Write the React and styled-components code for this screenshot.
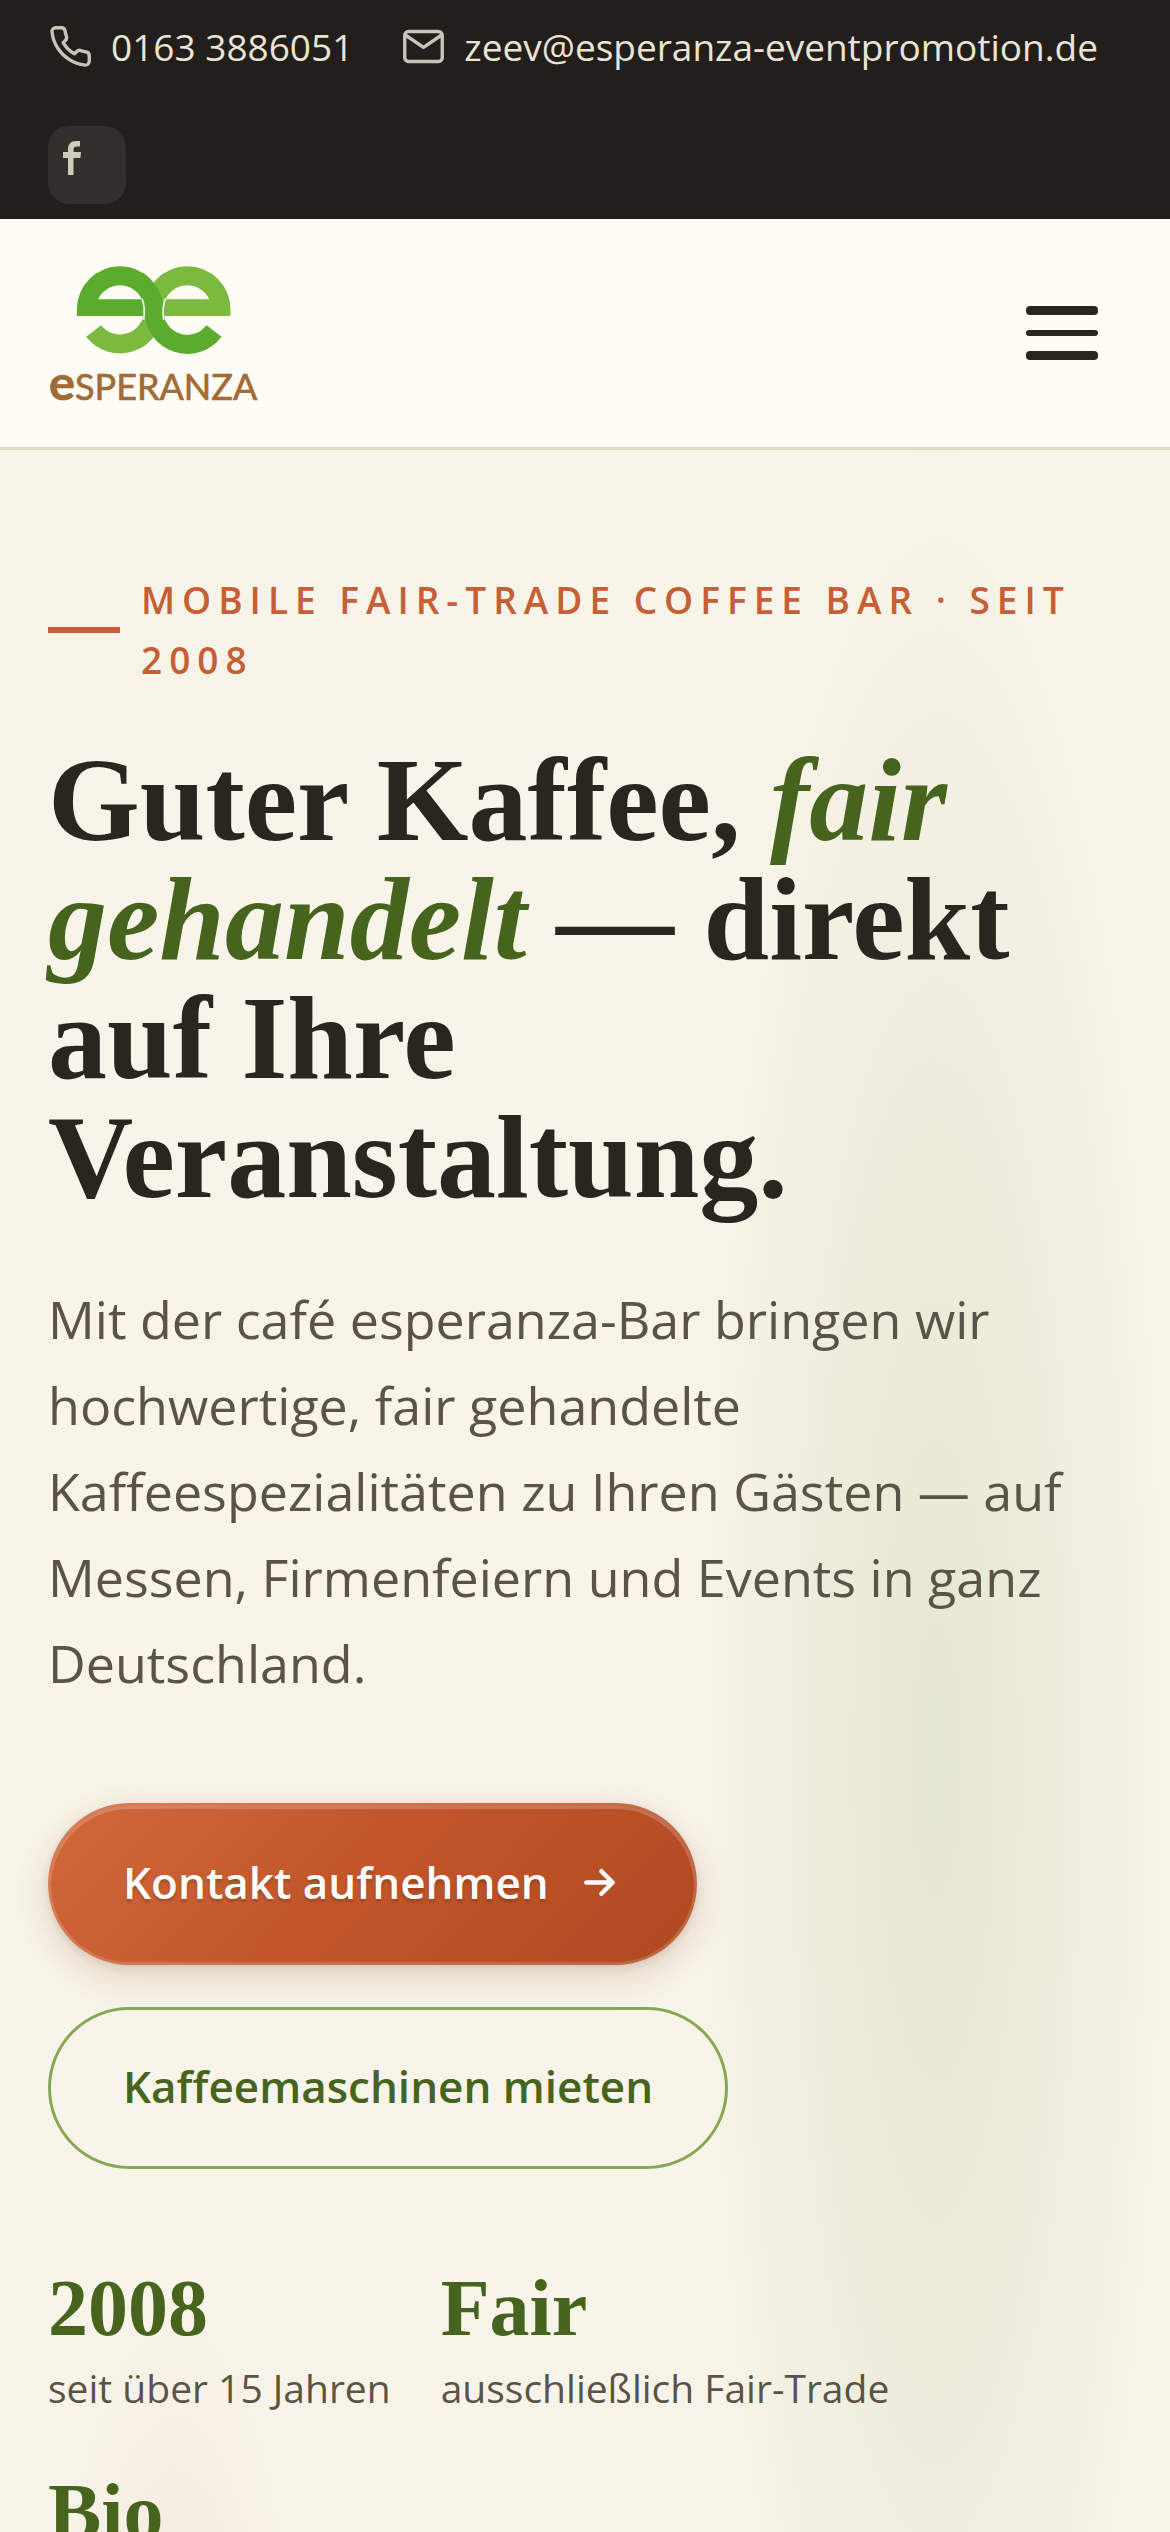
import styled, { createGlobalStyle } from 'styled-components';

const stats = [
  { value: '2008', label: 'seit über 15 Jahren' },
  { value: 'Fair', label: 'ausschließlich Fair-Trade' },
  { value: 'Bio' },
];

export default function App() {
  return (
    <Page>
      <GlobalStyle />
      <TopBar>
        <Contacts>
          <ContactLink href="tel:01633886051">
            <Icon viewBox="0 0 24 24" $thickness={1.8}>
              <path d="M22 16.92v3a2 2 0 0 1-2.18 2 19.79 19.79 0 0 1-8.63-3.07 19.5 19.5 0 0 1-6-6 19.79 19.79 0 0 1-3.07-8.67A2 2 0 0 1 4.11 2h3a2 2 0 0 1 2 1.72 12.84 12.84 0 0 0 .7 2.81 2 2 0 0 1-.45 2.11L8.09 9.91a16 16 0 0 0 6 6l1.27-1.27a2 2 0 0 1 2.11-.45 12.84 12.84 0 0 0 2.81.7A2 2 0 0 1 22 16.92z" />
            </Icon>
            0163 3886051
          </ContactLink>
          <ContactLink href="mailto:zeev@esperanza-eventpromotion.de">
            <Icon viewBox="0 0 24 24" $thickness={1.8}>
              <rect x="2" y="4" width="20" height="16" rx="2" />
              <path d="M2.5 6 12 12.5l9.5-6.5" />
            </Icon>
            zeev@esperanza-eventpromotion.de
          </ContactLink>
        </Contacts>
        <SocialLink href="#facebook" aria-label="Facebook">
          <svg width="18" height="34" viewBox="0 0 18 34">
            <path
              fill="#cfcbbd"
              d="M5 34V17H0v-6h5V8.5C5 3 8 0 13 0h4v5.5h-3C11.5 5.5 10.5 6.5 10.5 9v2H18l-.6 6h-6.9v17z"
            />
          </svg>
        </SocialLink>
      </TopBar>

      <Header>
        <LogoLink href="#start">
          <Logo />
        </LogoLink>
        <MenuButton type="button" aria-label="Menü">
          <MenuLine />
          <MenuLine $thin />
          <MenuLine />
        </MenuButton>
      </Header>

      <Hero>
        <Eyebrow>Mobile Fair-Trade Coffee Bar · Seit 2008</Eyebrow>
        <Title>
          Guter Kaffee, <em>fair gehandelt</em> — direkt auf Ihre Veranstaltung.
        </Title>
        <Lead>
          Mit der café esperanza-Bar bringen wir hochwertige, fair gehandelte
          Kaffeespezialitäten zu Ihren Gästen — auf Messen, Firmenfeiern und
          Events in ganz Deutschland.
        </Lead>
        <Actions>
          <PrimaryButton href="#kontakt">
            Kontakt aufnehmen
            <Icon viewBox="0 0 24 24" $thickness={2.4}>
              <path d="M5 12h14M13 6l6 6-6 6" />
            </Icon>
          </PrimaryButton>
          <OutlineButton href="#mieten">Kaffeemaschinen mieten</OutlineButton>
        </Actions>
        <Stats>
          {stats.map((stat) => (
            <div key={stat.value}>
              <StatValue>{stat.value}</StatValue>
              {stat.label && <StatLabel>{stat.label}</StatLabel>}
            </div>
          ))}
        </Stats>
      </Hero>
    </Page>
  );
}

function Logo() {
  return (
    <LogoSvg width="210" height="150" viewBox="54 54 630 450">
      <g fill="none" strokeWidth="57">
        <path stroke="#7cb93f" d="M573 228V210A101 103 0 0 0 371 210" />
        <path stroke="#7cb93f" d="M191 273A101 103 0 0 0 371 210" />
        <path
          stroke="#5bab2e"
          d="M169 228V210A101 103 0 0 1 371 210A101 103 0 0 0 552 273"
        />
      </g>
      <path fill="#5bab2e" d="M160 178H336Q343 203 341 228H160z" />
      <path fill="#7cb93f" d="M584 178H408Q399 203 402 228H584z" />
      <g fill="none" stroke="#e9f3dc" strokeWidth="5">
        <path d="M336 176Q347 204 341 240" />
        <path d="M406 176Q395 204 401 240" />
      </g>
      <LogoText x="57" y="480">
        <tspan fontSize="146" fontWeight="700">e</tspan>
        <tspan fontSize="108">SPERANZA</tspan>
      </LogoText>
    </LogoSvg>
  );
}

const GlobalStyle = createGlobalStyle`
  * {
    box-sizing: border-box;
  }
  body {
    margin: 0;
    background: #f8f4e9;
    color: #2b2520;
    font-family: 'Open Sans', 'Noto Sans', sans-serif;
  }
  a {
    color: inherit;
    text-decoration: none;
  }
`;

const Page = styled.div`
  display: flex;
  flex-direction: column;
  height: 100vh;
  overflow: hidden;
`;

const TopBar = styled.div`
  display: flex;
  flex-direction: column;
  align-items: flex-start;
  gap: 48px;
  padding: 15px 48px;
  background: #211e1b;
  color: #ebe3d3;
`;

const Contacts = styled.div`
  display: flex;
  gap: 48px;
`;

const ContactLink = styled.a`
  display: flex;
  align-items: center;
  gap: 18px;
  font-size: 37px;
  font-weight: 500;
  line-height: 63px;
  white-space: nowrap;

  svg {
    color: #c9c4ba;
  }
`;

const Icon = styled.svg`
  flex: none;
  width: 45px;
  height: 45px;
  fill: none;
  stroke: currentColor;
  stroke-width: ${(props) => props.$thickness};
  stroke-linecap: round;
  stroke-linejoin: round;
`;

const SocialLink = styled.a`
  display: flex;
  width: 78px;
  height: 78px;
  padding: 15px;
  border-radius: 21px;
  background: #31302c;
`;

const Header = styled.header`
  display: flex;
  align-items: center;
  justify-content: space-between;
  padding: 39px 48px;
  border-bottom: 3px solid #e0dac8;
  background: #fefdf5;
`;

const LogoLink = styled.a`
  display: flex;
`;

const LogoSvg = styled.svg`
  overflow: visible;
`;

const LogoText = styled.text`
  font-family: Lato, sans-serif;
  fill: #a26b35;
  stroke: #a26b35;
  stroke-width: 2;
`;

const MenuButton = styled.button`
  display: flex;
  flex-direction: column;
  gap: 15px;
  margin-right: 24px;
  padding: 0;
  border: 0;
  background: none;
`;

const MenuLine = styled.span`
  width: 72px;
  height: ${(props) => (props.$thin ? '6px' : '9px')};
  border-radius: 4px;
  background: #2b2520;
`;

const Hero = styled.main`
  flex: 1;
  min-height: 0;
  padding: 120px 48px 0;
  background:
    radial-gradient(
      ellipse 21% 64% at 80% 63%,
      rgba(130, 165, 95, 0.17),
      rgba(130, 165, 95, 0)
    ),
    radial-gradient(
      ellipse 11% 20% at 15% 108%,
      rgba(210, 90, 80, 0.07),
      rgba(210, 90, 80, 0)
    ),
    #f8f4e9;
`;

const Eyebrow = styled.p`
  display: flex;
  align-items: center;
  gap: 21px;
  margin: 0 0 51px;
  color: #c65f35;
  font-size: 37px;
  font-weight: 600;
  letter-spacing: 7px;
  line-height: 60px;
  text-transform: uppercase;

  &::before {
    content: '';
    flex: none;
    width: 72px;
    height: 6px;
    background: #c65f35;
  }
`;

const Title = styled.h1`
  margin: 0 0 59px;
  font-family: 'Liberation Serif', serif;
  font-size: 118px;
  font-weight: 700;
  line-height: 119px;

  em {
    color: #47641f;
  }
`;

const Lead = styled.p`
  margin: 0 0 97px;
  color: #5b5347;
  font-size: 52px;
  line-height: 86px;
`;

const Actions = styled.div`
  display: flex;
  flex-direction: column;
  align-items: flex-start;
  gap: 42px;
`;

const Button = styled.a`
  display: flex;
  align-items: center;
  gap: 28px;
  height: 162px;
  padding: 0 72px 4px;
  border: 3px solid;
  border-radius: 81px;
  font-size: 44px;
  font-weight: 600;
  white-space: nowrap;
`;

const PrimaryButton = styled(Button)`
  border-color: rgba(255, 255, 255, 0.16);
  background: linear-gradient(135deg, #d0683a, #c2552a 50%, #b04820) border-box;
  box-shadow:
    inset 0 3px 0 rgba(255, 255, 255, 0.2),
    0 12px 36px rgba(150, 75, 40, 0.2),
    0 3px 9px rgba(60, 30, 10, 0.1);
  color: #fff;
  text-shadow: 0 3px 3px rgba(0, 0, 0, 0.18);
`;

const OutlineButton = styled(Button)`
  border-color: #88a653;
  color: #47641f;
`;

const Stats = styled.div`
  display: grid;
  grid-template-columns: auto auto;
  justify-content: start;
  gap: 52px 50px;
  padding-top: 100px;
`;

const StatValue = styled.div`
  color: #47641f;
  font-family: 'Liberation Serif', serif;
  font-size: 80px;
  font-weight: 700;
  line-height: 78px;
`;

const StatLabel = styled.div`
  margin-top: 8px;
  color: #5b5347;
  font-size: 39px;
  line-height: 66px;
`;
